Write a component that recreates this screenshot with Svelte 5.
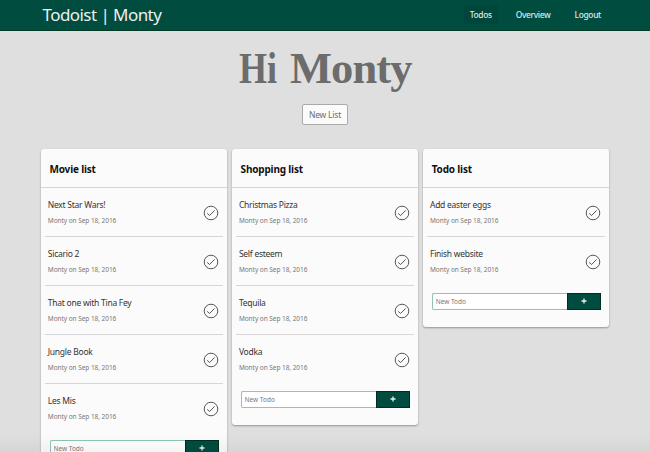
<script>
  const lists = [
    { title: 'Movie list', todos: ['Next Star Wars!', 'Sicario 2', 'That one with Tina Fey', 'Jungle Book', 'Les Mis'] },
    { title: 'Shopping list', todos: ['Christmas Pizza', 'Self esteem', 'Tequila', 'Vodka'] },
    { title: 'Todo list', todos: ['Add easter eggs', 'Finish website'] }
  ];
</script>

<div class="page">
  <header>
    <div class="brand">Todoist | Monty</div>
    <nav>
      <a class="active" href="#todos">Todos</a>
      <a href="#overview">Overview</a>
      <a href="#logout">Logout</a>
    </nav>
  </header>
  <h1><span class="hi">Hi</span> <span class="who">Monty</span></h1>
  <button class="new-list">New List</button>
  <main>
    {#each lists as list}
      <section>
        <h2>{list.title}</h2>
        {#each list.todos as todo}
          <article>
            <div class="copy">
              <div class="name">{todo}</div>
              <div class="meta">Monty on Sep 18, 2016</div>
            </div>
            <svg class="check" viewBox="0 0 16 16" width="16" height="16">
              <circle cx="8" cy="8" r="6.8" />
              <path d="M4.2 8.4 6.6 10.5 11.6 5.4" />
            </svg>
          </article>
        {/each}
        <form>
          <input placeholder="New Todo" />
          <button type="button" aria-label="Add">
            <svg viewBox="0 0 6 6" width="6" height="6"><path d="M3 .5v5M.5 3h5" /></svg>
          </button>
        </form>
      </section>
    {/each}
  </main>
  <div class="fade"></div>
</div>

<style>
  :global(body) { margin: 0; background: #dfdfdf; overflow: hidden; }
  .page { position: relative; width: 650px; height: 452px; overflow: hidden; background: #dfdfdf; font-family: "Noto Sans", "Open Sans", sans-serif; }
  header { height: 31px; box-sizing: border-box; background: #004d3f; border-bottom: 1px solid #003a25; display: flex; justify-content: space-between; padding: 0 43px 0 42.5px; color: #eee; }
  .brand { font-size: 17px; line-height: 29px; letter-spacing: -.56px; white-space: nowrap; }
  nav { display: flex; padding-top: 5px; gap: 12px; }
  nav a { color: #dfe8e5; font-size: 8.4px; font-weight: 500; line-height: 19px; height: 19px; padding: 0 6px; text-decoration: none; letter-spacing: -.32px; }
  .active { background: #00463a; }
  h1 { display: flex; gap: 13px; margin: 0; height: 73px; padding-left: 230px; font: bold 44.5px/75px "Liberation Serif", serif; color: #6c6c6c; }
  .hi { transform: scaleX(.81); transform-origin: right; }
  .who { letter-spacing: -.9px; }
  .new-list { display: block; box-sizing: border-box; margin: 0 auto; width: 46px; height: 21px; padding: 0; border: 1px solid #aaa; border-radius: 2px; background: #fbfbfb; color: #6c6c6c; font: 8.5px/19px "Noto Sans", sans-serif; letter-spacing: -.2px; }
  main { display: flex; align-items: flex-start; gap: 5px; margin: 24px 0 0 41px; }
  section { width: 186.1px; flex: none; background: #fbfbfb; border-radius: 3px; box-shadow: 0 1px 2px rgba(0,0,0,.34); padding-bottom: 17px; }
  h2 { margin: 0; height: 38.5px; box-sizing: border-box; border-bottom: 1px solid #d6d6d6; padding: 2px 0 0 8.5px; color: #111; font-size: 10px; line-height: 37px; font-weight: 700; letter-spacing: -.18px; }
  article { box-sizing: border-box; height: 49px; margin: 0 4px; padding: 0 4px 0 2.8px; border-bottom: 1px solid #d6d6d6; display: flex; justify-content: space-between; }
  article:last-of-type { border-color: transparent; }
  .name { margin-top: 10px; height: 14px; font-size: 8.5px; line-height: 14px; color: #333; letter-spacing: -.26px; white-space: nowrap; }
  .meta { margin-top: 4px; font-size: 6.5px; line-height: 10px; color: #777; letter-spacing: -.05px; white-space: nowrap; }
  .check { margin-top: 17px; fill: none; stroke: #444; stroke-width: .9; }
  form { display: flex; height: 17px; margin: 7px 8.5px 0 8.5px; }
  input { box-sizing: border-box; min-width: 0; flex: 1; margin: 0; padding: 0 0 0 3px; outline: none; border: 1px solid #8fc4b6; border-right: 0; border-radius: 2px 0 0 2px; background: #fff; font: 6.5px "Noto Sans", sans-serif; }
  input::placeholder { color: #777; opacity: 1; }
  form button { box-sizing: border-box; width: 34px; padding: 0; border: 1px solid #002d20; background: #004d3f; display: flex; align-items: center; justify-content: center; }
  form svg { stroke: #eee; stroke-width: 1.3; }
  .fade { position: absolute; left: 0; right: 0; bottom: 0; height: 18px; background: linear-gradient(transparent, rgba(0,0,0,.045)); }
</style>
